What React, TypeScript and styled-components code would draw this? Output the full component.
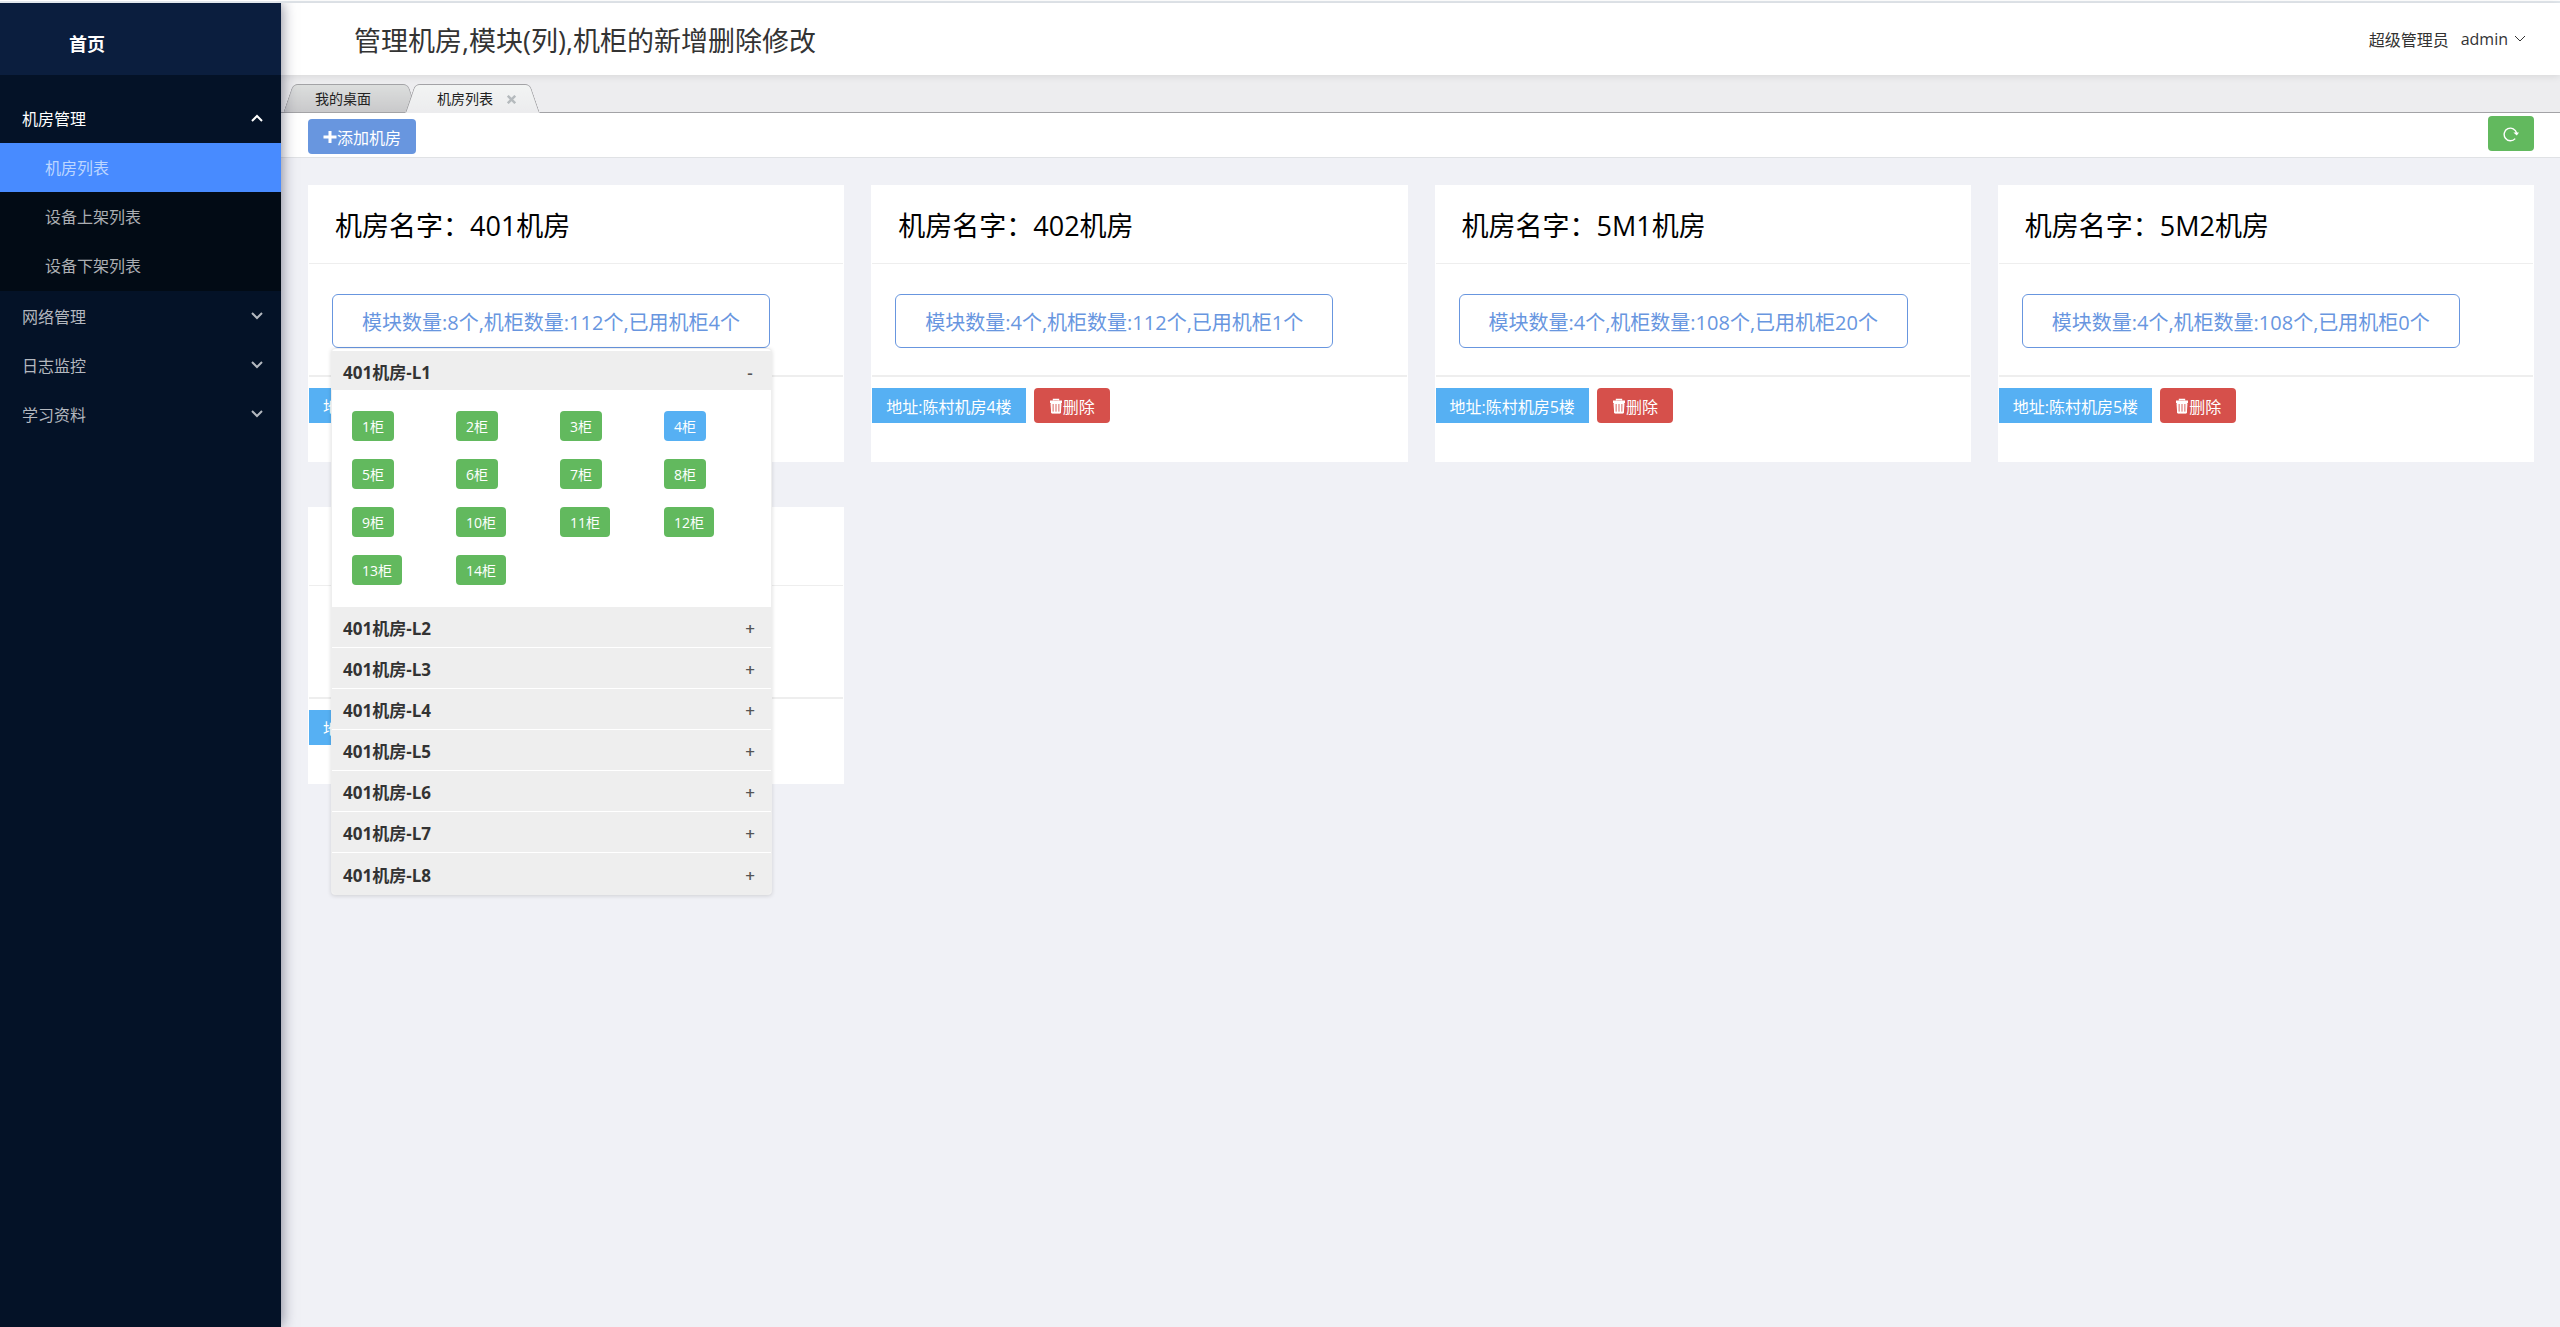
import React, { useState } from "react";
import styled, { createGlobalStyle, css } from "styled-components";

const colors = {
  page: "#f0f1f6",
  primary: "#6896df",
  success: "#62b95e",
  info: "#56b0f3",
  danger: "#d6504b",
  line: "#eeeeee",
  text: "#333333",
};

const GlobalStyle = createGlobalStyle`
  *, *::before, *::after { box-sizing: border-box; }
  body {
    margin: 0;
    background: ${colors.page};
    color: ${colors.text};
    font-family: "Open Sans", "Noto Sans CJK SC", sans-serif;
    font-size: 16px;
    line-height: 24px;
  }
  button { font-family: inherit; cursor: pointer; }
  h1, h2, h3, ul { margin: 0; padding: 0; font-weight: 400; }
  ul { list-style: none; }
  svg { display: block; flex: none; }
`;

const TopStrip = styled.div`
  height: 3px;
  border-top: 1px solid #fff;
  background: #e3e8ed;
`;

const Shell = styled.div`
  display: grid;
  grid-template-columns: 281px minmax(0, 1fr);
  min-height: calc(100vh - 3px);
`;

const Sidebar = styled.nav`
  position: relative;
  z-index: 5;
  background: #041227;
  box-shadow: 0 0 14px rgba(20, 20, 50, 0.55);
  clip-path: inset(0 -20px 0 0);
`;

const Home = styled.a`
  display: flex;
  align-items: center;
  height: 72px;
  padding: 10px 0 0 69px;
  margin-bottom: 18px;
  background: #0b1e3e;
  color: #fff;
  font-size: 18px;
  font-weight: 700;
  text-decoration: none;
`;

const Group = styled.button<{ $open?: boolean }>`
  display: flex;
  align-items: center;
  justify-content: space-between;
  width: 100%;
  height: 49px;
  padding: 0 18px 0 22px;
  border: 0;
  background: none;
  color: ${(p) => (p.$open ? "#fff" : "#b4b8bf")};
  font-size: 16px;
`;

const SubMenu = styled.ul`
  padding-bottom: 1px;
  margin-top: 1px;
  background: #020b15;
`;

const SubLink = styled.a<{ $active?: boolean }>`
  display: flex;
  align-items: center;
  height: 49px;
  padding-left: 45px;
  background: ${(p) => (p.$active ? "#488bff" : "transparent")};
  color: ${(p) => (p.$active ? "#bcd6ff" : "#abaeb2")};
  text-decoration: none;
`;

const Header = styled.header`
  position: relative;
  z-index: 2;
  display: flex;
  align-items: center;
  justify-content: space-between;
  height: 72px;
  padding: 0 34px 0 73px;
  background: #fff;
  box-shadow: 0 1px 8px rgba(0, 0, 0, 0.1);
`;

const PageTitle = styled.h1`
  padding-top: 4px;
  font-size: 27px;
  line-height: 36px;
`;

const UserMenu = styled.button`
  display: flex;
  align-items: center;
  gap: 12px;
  padding: 0;
  border: 0;
  background: none;
  color: #333;
  font-size: 16px;
  svg { margin-left: -6px; }
`;

const TabBar = styled.div`
  display: flex;
  align-items: flex-end;
  height: 38px;
  padding-left: 2px;
  border-bottom: 1px solid #a3a3a6;
  background: #ededef;
`;

const Tab = styled.div<{ $active?: boolean }>`
  position: relative;
  z-index: ${(p) => (p.$active ? 1 : 0)};
  display: flex;
  align-items: center;
  width: 135px;
  height: 29px;
  margin: 0 -13px -1px 0;
  padding: 0 24px 0 32px;
  justify-content: space-between;

  &::before,
  &::after {
    content: "";
    position: absolute;
    z-index: -1;
    top: 0;
    bottom: 0;
    width: 52%;
    border: 1px solid #a3a3a6;
    background: ${(p) =>
      p.$active
        ? "linear-gradient(#f2f4f3, #ececee)"
        : "linear-gradient(#dcdedd, #c9c9cb)"};
    ${(p) =>
      p.$active
        ? css`border-bottom-color: #ececee;`
        : ""}
  }
  &::before {
    left: 0;
    border-right: 0;
    border-top-left-radius: 5px;
    transform: skewX(-19deg);
    transform-origin: left bottom;
  }
  &::after {
    right: 0;
    border-left: 0;
    border-top-right-radius: 5px;
    transform: skewX(19deg);
    transform-origin: right bottom;
  }
`;

const TabLabel = styled.button`
  padding: 0;
  border: 0;
  background: none;
  color: #222;
  font-size: 14px;
  line-height: 20px;
`;

const TabClose = styled.button`
  padding: 2px 0 0;
  border: 0;
  background: none;
  color: #b5babd;
`;

const Toolbar = styled.div`
  display: flex;
  align-items: flex-start;
  justify-content: space-between;
  height: 45px;
  padding: 3px 26px 0 27px;
  border-bottom: 1px solid #e0e2e5;
  background: #fff;
`;

const Button = styled.button<{ $tone: keyof typeof colors; $square?: boolean }>`
  display: inline-flex;
  align-items: center;
  justify-content: center;
  height: 35px;
  padding: 0 ${(p) => (p.$square ? 14 : 15)}px;
  border: 0;
  border-radius: ${(p) => (p.$square ? 0 : 4)}px;
  background: ${(p) => colors[p.$tone]};
  color: #fff;
  font-size: 16px;
  white-space: nowrap;
`;

const AddSlot = styled.div`
  padding-top: 3px;
`;

const RoomGrid = styled.main`
  display: grid;
  grid-template-columns: repeat(4, minmax(0, 1fr));
  gap: 45px 27px;
  padding: 27px 26px 45px 27px;
`;

const Card = styled.section`
  position: relative;
  padding: 1px;
  background: #fff;
`;

const CardTitle = styled.h2`
  height: 78px;
  padding: 22px 26px 0;
  border-bottom: 1px solid ${colors.line};
  color: #000;
  font-size: 27px;
  line-height: 36px;
`;

const CardBody = styled.div`
  height: 113px;
  padding: 30px 23px 0;
  border-bottom: 2px solid ${colors.line};
`;

const Summary = styled.button`
  height: 54px;
  padding: 0 29px;
  border: 1px solid ${colors.primary};
  border-radius: 6px;
  background: #fff;
  color: ${colors.primary};
  font-size: 20px;
  white-space: nowrap;
`;

const CardFooter = styled.footer`
  display: flex;
  gap: 8px;
  height: 84px;
  padding-top: 11px;
`;

const Popup = styled.div`
  position: absolute;
  z-index: 3;
  top: 163px;
  left: 23px;
  width: 441px;
  padding-top: 2px;
  border: 1px solid #eeeeee;
  border-radius: 4px;
  background: #fff;
  box-shadow: 0 1px 4px rgba(0, 0, 0, 0.14);
  overflow: hidden;
`;

const ModuleHeading = styled.button<{ $open?: boolean }>`
  display: flex;
  align-items: center;
  justify-content: space-between;
  width: 100%;
  height: ${(p) => (p.$open ? 39 : 41)}px;
  padding: 1px 16px 0 11px;
  border: 0;
  border-bottom: ${(p) => (p.$open ? 0 : 1)}px solid #fff;
  background: #eeeeee;
  color: #333;
  font-size: 17px;
  font-weight: 700;

  &:last-child { border-bottom: 0; }
`;

const Sign = styled.span`
  width: 10px;
  padding-top: 2px;
  color: #555;
  font-weight: 600;
  text-align: center;
`;

const Cabinets = styled.div`
  display: grid;
  grid-template-columns: repeat(4, 104px);
  justify-items: start;
  gap: 18px 0;
  padding: 21px 0 22px 20px;
`;

const Cabinet = styled.button<{ $used: boolean }>`
  height: 30px;
  padding: 0 10px;
  border: 0;
  border-radius: 4px;
  background: ${(p) => (p.$used ? colors.info : colors.success)};
  color: #fff;
  font-size: 14px;
`;

const Chevron = ({ up = false, thin = false }) => (
  <svg width="12" height="8" viewBox="0 0 12 8" fill="none" stroke="currentColor" strokeWidth={thin ? 1 : 2}>
    <path d={up ? "M1 7 6 2l5 5" : "M1 1l5 5 5-5"} />
  </svg>
);

const PlusIcon = () => (
  <svg width="14" height="14" viewBox="0 0 14 14" fill="none" stroke="currentColor" strokeWidth="3">
    <path d="M7 1v12M.5 7h13" />
  </svg>
);

const RefreshIcon = () => (
  <svg width="16" height="16" viewBox="0 0 16 16" fill="none" stroke="currentColor" strokeWidth="1.4">
    <path d="M12.2 12.6A6.3 6.3 0 1 1 13.6 7" />
    <path d="M10.4 6.4h5.6l-2.2 3z" fill="currentColor" stroke="none" />
  </svg>
);

const TrashIcon = () => (
  <svg width="14" height="16" viewBox="0 0 14 16" fill="none" stroke="currentColor">
    <path d="M4.5 2.5v-1h5v1" strokeWidth="1.4" />
    <path d="M1 3.8h12" strokeWidth="2.6" />
    <path d="M2 5.5h10l-.7 9.5H2.7z" fill="currentColor" fillOpacity=".45" strokeWidth="1" />
    <path d="M2.8 5v9.3M11.2 5v9.3M5.6 6v8M8.4 6v8" strokeWidth="1.2" />
    <path d="M2.5 14.4h9" strokeWidth="1.6" />
  </svg>
);

const CloseIcon = () => (
  <svg width="9" height="9" viewBox="0 0 9 9" fill="none" stroke="currentColor" strokeWidth="2.4">
    <path d="M.8.8l7.4 7.4M8.200.8.8 8.2" />
  </svg>
);

type Room = { id: number; name?: string; summary?: string; address: string };

const rooms: Room[] = [
  { id: 1, name: "401机房", summary: "模块数量:8个,机柜数量:112个,已用机柜4个", address: "陈村机房4楼" },
  { id: 2, name: "402机房", summary: "模块数量:4个,机柜数量:112个,已用机柜1个", address: "陈村机房4楼" },
  { id: 3, name: "5M1机房", summary: "模块数量:4个,机柜数量:108个,已用机柜20个", address: "陈村机房5楼" },
  { id: 4, name: "5M2机房", summary: "模块数量:4个,机柜数量:108个,已用机柜0个", address: "陈村机房5楼" },
  { id: 5, address: "" },
];

const modules = ["L1", "L2", "L3", "L4", "L5", "L6", "L7", "L8"];
const cabinets = Array.from({ length: 14 }, (_, i) => i + 1);
const usedCabinets = [4];

function ModulePopup({ room }: { room: string }) {
  const [open, setOpen] = useState("L1");
  return (
    <Popup>
      {modules.map((m) => (
        <React.Fragment key={m}>
          <ModuleHeading $open={open === m} aria-expanded={open === m} onClick={() => setOpen(open === m ? "" : m)}>
            <span>{room}-{m}</span>
            <Sign>{open === m ? "-" : "+"}</Sign>
          </ModuleHeading>
          {open === m && (
            <Cabinets>
              {cabinets.map((n) => (
                <Cabinet key={n} $used={usedCabinets.includes(n)}>{n}柜</Cabinet>
              ))}
            </Cabinets>
          )}
        </React.Fragment>
      ))}
    </Popup>
  );
}

function RoomCard({ room, expanded, onToggle }: { room: Room; expanded: boolean; onToggle: () => void }) {
  return (
    <Card>
      <CardTitle>{room.name && `机房名字：${room.name}`}</CardTitle>
      <CardBody>
        {room.summary && <Summary aria-expanded={expanded} onClick={onToggle}>{room.summary}</Summary>}
      </CardBody>
      <CardFooter>
        <Button $tone="info" $square>地址:{room.address}</Button>
        {room.name && <Button $tone="danger"><TrashIcon />删除</Button>}
      </CardFooter>
      {expanded && room.name && <ModulePopup room={room.name} />}
    </Card>
  );
}

export default function App() {
  const [expanded, setExpanded] = useState(1);
  return (
    <>
      <GlobalStyle />
      <TopStrip />
      <Shell>
        <Sidebar>
          <Home href="#home">首页</Home>
          <Group $open aria-expanded>机房管理<Chevron up /></Group>
          <SubMenu>
            <li><SubLink href="#rooms" $active>机房列表</SubLink></li>
            <li><SubLink href="#mounted">设备上架列表</SubLink></li>
            <li><SubLink href="#unmounted">设备下架列表</SubLink></li>
          </SubMenu>
          <Group>网络管理<Chevron /></Group>
          <Group>日志监控<Chevron /></Group>
          <Group>学习资料<Chevron /></Group>
        </Sidebar>
        <div>
          <Header>
            <PageTitle>管理机房,模块(列),机柜的新增删除修改</PageTitle>
            <UserMenu>
              <span>超级管理员</span>
              <span>admin</span>
              <Chevron thin />
            </UserMenu>
          </Header>
          <TabBar>
            <Tab><TabLabel>我的桌面</TabLabel></Tab>
            <Tab $active>
              <TabLabel>机房列表</TabLabel>
              <TabClose aria-label="关闭"><CloseIcon /></TabClose>
            </Tab>
          </TabBar>
          <Toolbar>
            <AddSlot><Button $tone="primary"><PlusIcon />添加机房</Button></AddSlot>
            <Button $tone="success" aria-label="刷新"><RefreshIcon /></Button>
          </Toolbar>
          <RoomGrid>
            {rooms.map((r) => (
              <RoomCard
                key={r.id}
                room={r}
                expanded={expanded === r.id}
                onToggle={() => setExpanded(expanded === r.id ? 0 : r.id)}
              />
            ))}
          </RoomGrid>
        </div>
      </Shell>
    </>
  );
}
